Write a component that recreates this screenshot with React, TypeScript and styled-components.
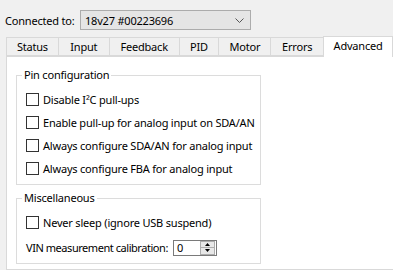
import React from 'react';
import styled, { createGlobalStyle } from 'styled-components';

const GlobalStyle = createGlobalStyle`
  body {
    margin: 0;
    background: #f0f0f0;
    font-family: 'Noto Sans', 'Open Sans', sans-serif;
    font-size: 11px;
    letter-spacing: -0.2px;
    color: #000;
  }
`;

const Window = styled.div`
  width: 393px;
  height: 270px;
  overflow: hidden;
  background: #f0f0f0;
`;

const TopBar = styled.div`
  display: flex;
  align-items: center;
  height: 20px;
  padding: 10px 0 0 5px;
`;

const Label = styled.span`
  width: 75px;
  white-space: nowrap;
`;

const Combo = styled.div`
  box-sizing: border-box;
  width: 171px;
  height: 20px;
  display: flex;
  align-items: center;
  justify-content: space-between;
  padding: 0 6px 0 4px;
  background: #e5e5e5;
  border: 1px solid #acacac;
`;

const TabStrip = styled.div`
  display: flex;
  align-items: flex-end;
  height: 20px;
  margin: 6px 0 0 6px;
`;

const Tab = styled.div<{ $active?: boolean; $w: number }>`
  box-sizing: border-box;
  width: ${(p) => p.$w}px;
  height: ${(p) => (p.$active ? 21 : 19)}px;
  margin-left: -1px;
  margin-bottom: ${(p) => (p.$active ? -1 : 0)}px;
  display: flex;
  align-items: center;
  justify-content: center;
  padding-bottom: ${(p) => (p.$active ? 3 : 0)}px;
  background: ${(p) => (p.$active ? '#fff' : '#f0f0f0')};
  border: 1px solid #d9d9d9;
  border-bottom: ${(p) => (p.$active ? 'none' : '1px solid #d9d9d9')};
  position: relative;
  z-index: ${(p) => (p.$active ? 1 : 0)};
  &:first-child {
    margin-left: 0;
  }
`;

const Panel = styled.div`
  box-sizing: border-box;
  height: 214px;
  margin-left: 6px;
  background: #fff;
  border: 1px solid #d9d9d9;
  border-right: none;
  padding: 11px 0 0 9px;
  display: flex;
  flex-direction: column;
  gap: 6px;
`;

const Group = styled.fieldset`
  box-sizing: border-box;
  width: 245px;
  margin: 0;
  padding: 0;
  border: 1px solid #dcdcdc;
`;

const Legend = styled.legend`
  margin-left: 5px;
  padding: 0 2px;
  line-height: 14px;
`;

const GroupBody = styled.div<{ $top: number; $bottom: number }>`
  display: flex;
  flex-direction: column;
  padding: ${(p) => p.$top}px 0 ${(p) => p.$bottom}px 9px;
`;

const Row = styled.div<{ $h?: number }>`
  display: flex;
  align-items: center;
  gap: 4px;
  height: ${(p) => p.$h ?? 23}px;
  white-space: nowrap;
`;

const FieldLabel = styled.span`
  letter-spacing: -0.45px;
`;

const Box = styled.span`
  box-sizing: border-box;
  width: 13px;
  height: 13px;
  border: 1px solid #333;
  background: #fff;
  flex-shrink: 0;
`;

const Spinner = styled.div`
  box-sizing: border-box;
  width: 44px;
  height: 16px;
  margin-left: 1px;
  display: flex;
  align-items: center;
  justify-content: space-between;
  border: 1px solid #7a7a7a;
  padding: 0 1px 0 3px;
`;

const SpinButtons = styled.div`
  display: flex;
  flex-direction: column;
  width: 13px;
  height: 12px;
  border: 1px solid #adadad;
  background: #e8e8e8;
`;

const SpinHalf = styled.div`
  flex: 1;
  display: flex;
  align-items: center;
  justify-content: center;
  & + & {
    border-top: 1px solid #adadad;
  }
`;

const tabs: [string, number][] = [
  ['Status', 53],
  ['Input', 52],
  ['Feedback', 71],
  ['PID', 41],
  ['Motor', 53],
  ['Errors', 54],
];

const pinOptions = [
  'Disable I²C pull-ups',
  'Enable pull-up for analog input on SDA/AN',
  'Always configure SDA/AN for analog input',
  'Always configure FBA for analog input',
];

export default function App() {
  return (
    <Window>
      <GlobalStyle />
      <TopBar>
        <Label>Connected to:</Label>
        <Combo>
          <span>18v27 #00223696</span>
          <svg width="9" height="5" viewBox="0 0 9 5">
            <path d="M0.5 0.5 L4.5 4.5 L8.5 0.5" fill="none" stroke="#555" strokeWidth="1" />
          </svg>
        </Combo>
      </TopBar>
      <TabStrip>
        {tabs.map(([t, w]) => (
          <Tab key={t} $w={w}>
            {t}
          </Tab>
        ))}
        <Tab $active $w={70}>
          Advanced
        </Tab>
      </TabStrip>
      <Panel>
        <Group>
          <Legend>Pin configuration</Legend>
          <GroupBody $top={6} $bottom={4}>
            {pinOptions.map((o) => (
              <Row key={o}>
                <Box />
                {o}
              </Row>
            ))}
          </GroupBody>
        </Group>
        <Group>
          <Legend>Miscellaneous</Legend>
          <GroupBody $top={6} $bottom={2}>
            <Row>
              <Box />
              Never sleep (ignore USB suspend)
            </Row>
            <Row $h={27}>
              <FieldLabel>VIN measurement calibration:</FieldLabel>
              <Spinner>
                <span>0</span>
                <SpinButtons>
                  <SpinHalf>
                    <svg width="5" height="3" viewBox="0 0 5 3">
                      <path d="M0 3 L2.5 0 L5 3 Z" fill="#000" />
                    </svg>
                  </SpinHalf>
                  <SpinHalf>
                    <svg width="5" height="3" viewBox="0 0 5 3">
                      <path d="M0 0 L2.5 3 L5 0 Z" fill="#000" />
                    </svg>
                  </SpinHalf>
                </SpinButtons>
              </Spinner>
            </Row>
          </GroupBody>
        </Group>
      </Panel>
    </Window>
  );
}
